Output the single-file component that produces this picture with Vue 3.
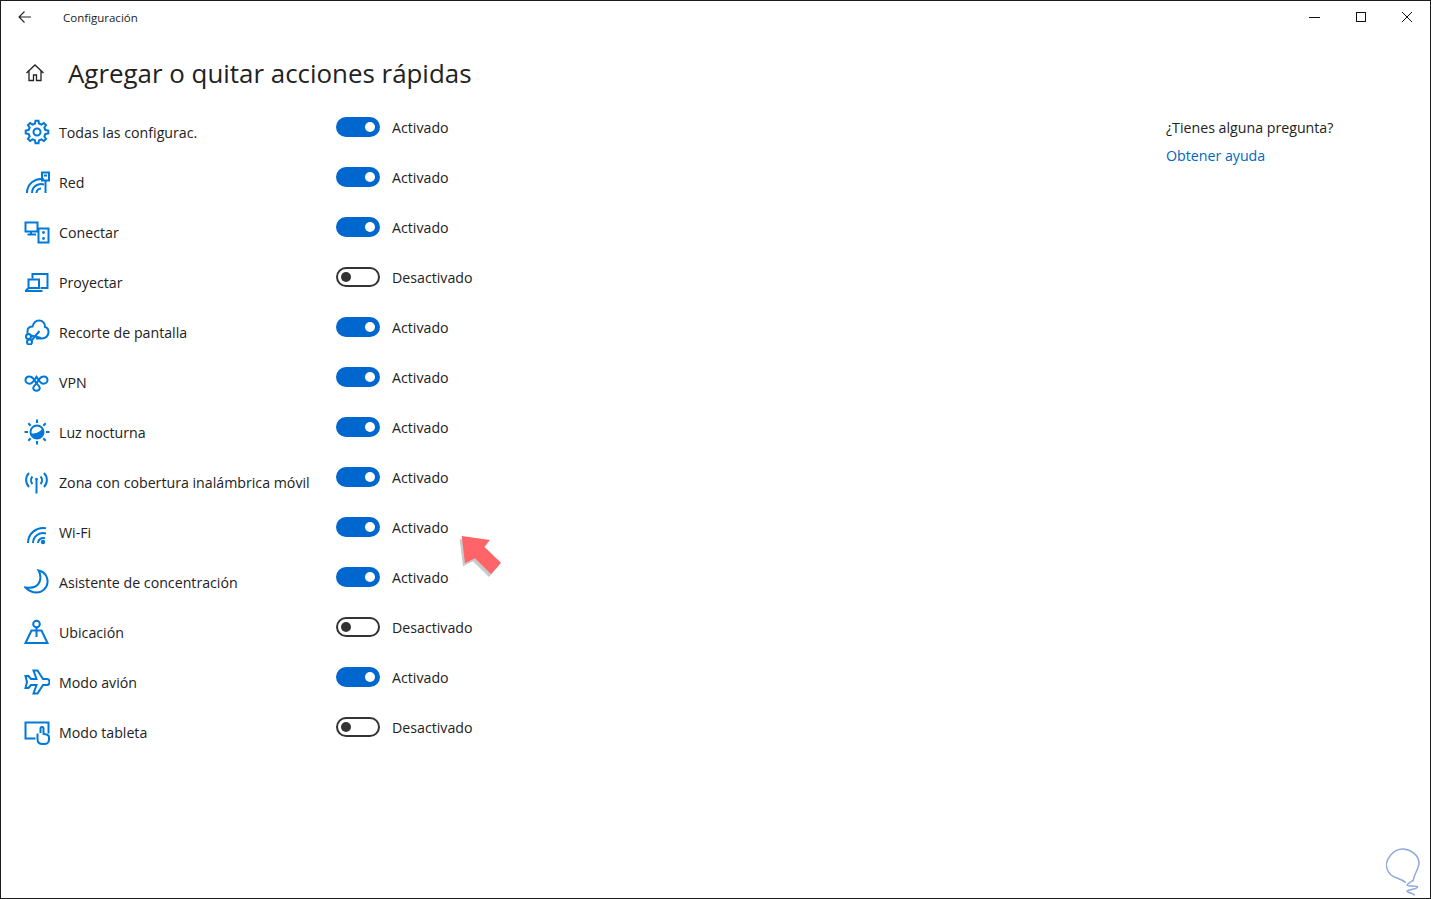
<script setup>
const gear = (() => {
  const c = 13, teeth = 8, R = 11.4, r = 8.6
  const pts = []
  for (let i = 0; i < teeth; i++) {
    const a = (i / teeth) * Math.PI * 2 - Math.PI / 2
    const s = (Math.PI * 2) / teeth
    for (const [d, rad] of [[-0.3, r], [-0.17, R], [0.17, R], [0.3, r]]) {
      const t = a + d * s
      pts.push(`${(c + rad * Math.cos(t)).toFixed(2)} ${(c + rad * Math.sin(t)).toFixed(2)}`)
    }
  }
  return 'M' + pts.join('L') + 'Z'
})()

const rows = [
  { key: 'gear', label: 'Todas las configurac.', on: true },
  { key: 'red', label: 'Red', on: true },
  { key: 'conectar', label: 'Conectar', on: true },
  { key: 'proyectar', label: 'Proyectar', on: false },
  { key: 'recorte', label: 'Recorte de pantalla', on: true },
  { key: 'vpn', label: 'VPN', on: true },
  { key: 'luz', label: 'Luz nocturna', on: true },
  { key: 'zona', label: 'Zona con cobertura inalámbrica móvil', on: true },
  { key: 'wifi', label: 'Wi-Fi', on: true },
  { key: 'luna', label: 'Asistente de concentración', on: true },
  { key: 'ubicacion', label: 'Ubicación', on: false },
  { key: 'avion', label: 'Modo avión', on: true },
  { key: 'tableta', label: 'Modo tableta', on: false }
]
</script>

<template>
  <div class="window">
    <header class="titlebar">
      <svg class="back" width="16" height="16" viewBox="0 0 16 16">
        <path d="M14 8H2M7.500 2.500 2 8l5.500 5.500" fill="none" stroke="#222" stroke-width="1.100" />
      </svg>
      <span class="app-name">Configuración</span>
      <div class="controls">
        <svg width="12" height="12" viewBox="0 0 12 12"><path d="M0 6.500H11" stroke="#111" fill="none" /></svg>
        <svg width="12" height="12" viewBox="0 0 12 12"><rect x="1.500" y="1.500" width="9" height="9" stroke="#111" fill="none" /></svg>
        <svg width="12" height="12" viewBox="0 0 12 12"><path d="M1 1 11 11M11 1 1 11" stroke="#111" fill="none" /></svg>
      </div>
    </header>

    <div class="heading">
      <svg class="home" width="20" height="20" viewBox="0 0 20 20">
        <path d="M1.500 10 10 2l8.500 8M4 8v9.500h4.500V12h3v5.500H16V8" fill="none" stroke="#222" stroke-width="1.300" />
      </svg>
      <h1>Agregar o quitar acciones rápidas</h1>
    </div>

    <main class="content">
      <div class="list">
        <div v-for="row in rows" :key="row.key" class="row">
          <div class="name">
            <svg class="icon" width="26" height="26" viewBox="0 0 26 26">
              <g v-if="row.key === 'gear'">
                <path :d="gear" /><circle cx="13" cy="13" r="3.500" />
              </g>
              <g v-else-if="row.key === 'red'">
                <path d="M3 24A14 14 0 0 1 20 10.300M8 24A9 9 0 0 1 20 15.500M12.500 24A4.500 4.500 0 0 1 17 19.500" />
                <rect x="18" y="3.500" width="7" height="8" /><path d="M21.500 11.500V24M20 6.500h3" />
              </g>
              <g v-else-if="row.key === 'conectar'">
                <path d="M1.500 3.500h12v9h-12zM7 12.500v3M3.500 15.500H12" />
                <rect x="14.500" y="9.500" width="10" height="14" /><circle cx="19.500" cy="13.500" r="1.400" class="fill" /><circle cx="19.500" cy="19.500" r="1.400" class="fill" />
              </g>
              <g v-else-if="row.key === 'proyectar'">
                <path d="M8.500 9.500v-4.500h15v14h-7" />
                <path d="M4.500 10.500h10.500v8.500h-10.500zM1 22h17.500M4.500 19 1.500 22" />
              </g>
              <g v-else-if="row.key === 'recorte'">
                <path d="M3.500 14.500V12c0-3 2.500-4.500 5-4.500C9.500 4 12 1.500 15 1.500c4 0 6 3 6 6.500 2.500.5 3.500 3 3.500 5 0 4-3 6.500-6.500 6.500H12" />
                <circle cx="4.500" cy="17.500" r="2.500" /><circle cx="5.500" cy="23" r="2.500" /><path d="M7 16.500 17 19M7.500 21.500 15.500 12" />
              </g>
              <g v-else-if="row.key === 'vpn'">
                <path d="M12.500 14.500C10 10 8.500 7.500 5.500 7.500 3 7.500 1.500 9 1.500 11S3 14.800 5.500 14.800c3 0 4.500-3 7-7 2.500 4 4 7 7 7 2.500 0 4-1.800 4-3.800s-1.500-3.500-4-3.500c-3 0-4.500 2.500-7 7" />
                <path d="M12.500 14.500c-1.500 1.500-3.300 3-3.300 4.500s1.500 2.800 3.300 2.800 3.300-1.300 3.300-2.800-1.800-3-3.300-4.500Z" />
              </g>
              <g v-else-if="row.key === 'luz'">
                <circle cx="13" cy="13" r="6.500" />
                <path class="fill" d="M7 14.500c3 .5 8-.5 11.500-5 1.500 3 1 6-.5 8s-4 2.500-6 2-4-3-5-5Z" />
                <path d="M13 .5v3.500M13 22v3.500M.5 13H4M22 13h3.500M4.300 4.300 6.700 6.700M19.300 19.300l2.400 2.400M21.700 4.300 19.300 6.700M6.700 19.300 4.300 21.700" />
              </g>
              <g v-else-if="row.key === 'zona'">
                <path d="M12.500 10V24.500M5 4A10 10 0 0 0 5 18M20 4A10 10 0 0 1 20 18M8.500 7.500A5.500 5.500 0 0 0 8.500 15M16.500 7.500A5.500 5.500 0 0 1 16.500 15" />
                <circle cx="12.500" cy="10" r="1.300" class="fill" />
              </g>
              <g v-else-if="row.key === 'wifi'">
                <path d="M4 24A15 15 0 0 1 22 9.300M9 24A10 10 0 0 1 22 14.500M14 24a5 5 0 0 1 7-4.600" />
                <circle cx="19" cy="23" r="2.200" class="fill" />
              </g>
              <g v-else-if="row.key === 'luna'">
                <path d="M14.500 1.500c7 1.500 9.500 7 9 12-.5 6-5.500 10-11 10-4 0-8-2-11-5 7 1 12-1 14-5.500 1.500-4 1-8-1-11.500Z" />
              </g>
              <g v-else-if="row.key === 'ubicacion'">
                <circle cx="12.500" cy="5" r="3.300" />
                <path d="M12.500 8.500V18M7.500 11.500h10l6 12.500h-22Z" />
              </g>
              <g v-else-if="row.key === 'avion'">
                <path d="M9.500 1.500h4l5.500 8.500h4c1.500 0 2.500 1.300 2.500 3s-1 3-2.500 3h-4l-5.500 8.500h-4l3-8.500H7l-2.500 3H1.500l1.500-6-1.500-6h3l2.500 3h5.500Z" />
              </g>
              <g v-else-if="row.key === 'tableta'">
                <path d="M11.500 19.500H1.500V3.500h23v11" />
                <path d="M16.500 14V9.500c0-2 3-2 3 0v5.500l3 .5c2 .5 2.500 1.500 2.500 3v2c0 2.500-2 4.500-4.500 4.500h-2c-3 0-5-2-5-5v-5.500" />
              </g>
            </svg>
            <span class="label">{{ row.label }}</span>
          </div>
          <div class="state">
            <span class="toggle" :class="{ on: row.on }"><i class="knob"></i></span>
            <span class="value">{{ row.on ? 'Activado' : 'Desactivado' }}</span>
          </div>
        </div>
      </div>

      <aside class="help">
        <p>¿Tienes alguna pregunta?</p>
        <a href="#" @click.prevent>Obtener ayuda</a>
      </aside>
    </main>

    <svg class="arrow" width="50" height="50" viewBox="0 0 50 50">
      <polygon points="4.700,0 33,4 27.300,10.700 44,26.700 34,38 18,22.300 8,27.300" fill="#c9c9c9" transform="translate(-2 3)" />
      <polygon points="4.700,0 33,4 27.300,10.700 44,26.700 34,38 18,22.300 8,27.300" fill="#ff6468" />
    </svg>

    <svg class="mark" width="60" height="60" viewBox="0 0 180 180">
      <path d="M103 130C90 118 72 118 60 108 48 96 42 78 50 62 60 40 80 28 98 30c22 2 44 18 46 40 1 18-14 32-18 56M126 124c-6 6-18 10-18 14 0 6 32 0 32 6 0 6-32 8-32 12 0 6 20 6 22 12" fill="none" stroke="#8fa9dc" stroke-width="4.500" stroke-linecap="round" />
    </svg>
  </div>
</template>

<style scoped>
.window {
  position: relative;
  box-sizing: border-box;
  width: 1431px;
  height: 899px;
  border: 1px solid #1c1c1c;
  background: #fff;
  color: #222;
  font-family: "Open Sans", "Liberation Sans", sans-serif;
  overflow: hidden;
}
.titlebar {
  display: flex;
  align-items: center;
  height: 32px;
}
.back { margin-left: 16px; }
.app-name {
  margin-left: 30px;
  font-size: 11.500px;
}
.controls {
  display: flex;
  gap: 34px;
  margin-left: auto;
  margin-right: 17px;
}
.heading {
  display: flex;
  align-items: center;
  gap: 23px;
  height: 48px;
  margin-top: 16px;
  padding-left: 24px;
}
.home { flex: none; }
h1 {
  margin: 0;
  font-size: 25.900px;
  font-weight: 400;
  color: #222;
}
.content {
  display: flex;
  justify-content: space-between;
  margin-top: 12px;
}
.list { padding-left: 23px; }
.row {
  display: flex;
  align-items: flex-start;
  height: 50px;
}
.name {
  display: flex;
  align-items: center;
  gap: 9px;
  width: 312px;
  height: 36px;
  margin-top: 5px;
}
.icon {
  flex: none;
  fill: none;
  stroke: #0078d7;
  stroke-width: 2;
}
.icon .fill { fill: #0078d7; stroke: none; }
.label { font-size: 14.200px; }
.state {
  display: flex;
  align-items: center;
  gap: 12px;
  height: 36px;
}
.toggle {
  box-sizing: border-box;
  display: flex;
  align-items: center;
  justify-content: flex-start;
  width: 44px;
  height: 20px;
  padding: 0 3px;
  border: 2px solid #333;
  border-radius: 10px;
}
.toggle.on {
  justify-content: flex-end;
  background: #0067ce;
  border-color: #0067ce;
}
.knob {
  width: 10px;
  height: 10px;
  border-radius: 50%;
  background: #333;
}
.toggle.on .knob { background: #fff; }
.value { font-size: 14.200px; }
.help {
  width: 264px;
  padding-top: 9px;
  font-size: 14.200px;
}
.help p { margin: 0 0 8px; line-height: 20px; }
.help a {
  color: #0067c0;
  text-decoration: none;
  line-height: 20px;
}
.arrow {
  position: absolute;
  left: 456px;
  top: 535px;
}
.mark {
  position: absolute;
  right: -1px;
  bottom: -1px;
}
</style>
